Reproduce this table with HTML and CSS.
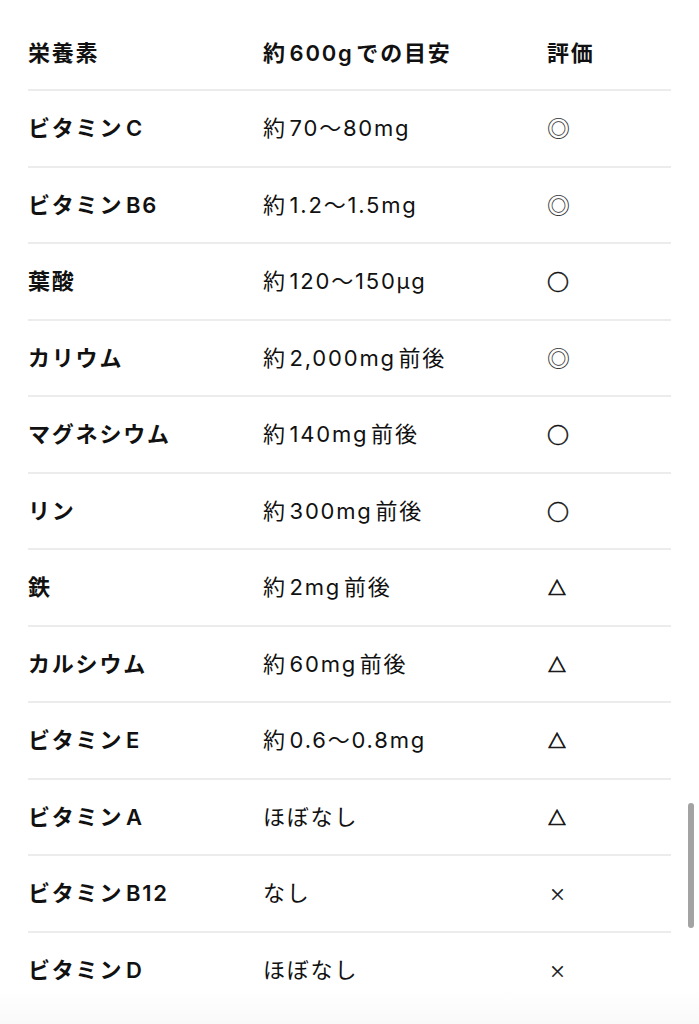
FILE: index.html
```html
<!DOCTYPE html>
<html lang="ja">
<head>
<meta charset="utf-8">
<link rel="stylesheet" href="styles.css">
</head>
<body>
<div class="page">
  <table class="nutri">
    <thead>
      <tr><th>栄養素</th><th>約600gでの目安</th><th>評価</th></tr>
    </thead>
    <tbody>
      <tr><td class="name">ビタミンC</td><td>約70～80mg</td><td><span class="double">◎</span></td></tr>
      <tr><td class="name">ビタミンB6</td><td>約1.2～1.5mg</td><td><span class="double">◎</span></td></tr>
      <tr><td class="name">葉酸</td><td>約120～150µg</td><td><span class="circle">○</span></td></tr>
      <tr><td class="name">カリウム</td><td>約2,000mg前後</td><td><span class="double">◎</span></td></tr>
      <tr><td class="name">マグネシウム</td><td>約140mg前後</td><td><span class="circle">○</span></td></tr>
      <tr><td class="name">リン</td><td>約300mg前後</td><td><span class="circle">○</span></td></tr>
      <tr><td class="name">鉄</td><td>約2mg前後</td><td><span class="tri">△</span></td></tr>
      <tr><td class="name">カルシウム</td><td>約60mg前後</td><td><span class="tri">△</span></td></tr>
      <tr><td class="name">ビタミンE</td><td>約0.6～0.8mg</td><td><span class="tri">△</span></td></tr>
      <tr><td class="name">ビタミンA</td><td>ほぼなし</td><td><span class="tri">△</span></td></tr>
      <tr><td class="name">ビタミンB12</td><td>なし</td><td><span class="cross">×</span></td></tr>
      <tr><td class="name">ビタミンD</td><td>ほぼなし</td><td><span class="cross">×</span></td></tr>
    </tbody>
  </table>
  <div class="scrollbar"></div>
</div>
</body>
</html>
```

FILE: styles.css
```css
html, body {
  margin: 0;
  padding: 0;
  background: #ffffff;
}
body {
  font-family: "Inter", "Noto Sans CJK JP", sans-serif;
  color: #111111;
  text-autospace: normal;
}
.page {
  position: relative;
  width: 699px;
  height: 1024px;
  overflow: hidden;
  padding: 16px 28px 0 28px;
  box-sizing: border-box;
  background: linear-gradient(to bottom, #ffffff 0, #ffffff 990px, #f9f9f9 1024px);
}
.nutri {
  width: 643px;
  border-collapse: collapse;
  font-size: 22px;
  letter-spacing: 1.8px;
}
.nutri th, .nutri td {
  text-align: left;
  padding: 0;
  height: 74.5px;
  vertical-align: middle;
  border-bottom: 2px solid #ececec;
  line-height: 1;
}
.nutri th {
  font-weight: 600;
  height: 73px;
}
.nutri tr:last-child td {
  border-bottom: none;
}
.nutri th:nth-child(1) { width: 235px; }
.nutri th:nth-child(2) { width: 284px; }
.name {
  font-weight: 600;
}
.double {
  font-family: "Noto Sans CJK JP", sans-serif;
  font-size: 23px;
  color: #333333;
}
.circle {
  font-family: "Noto Sans CJK JP", sans-serif;
  font-size: 22px;
  font-weight: 700;
  -webkit-text-stroke: 0.5px #111111;
}
.tri {
  font-family: "Noto Sans CJK JP", sans-serif;
  font-size: 18px;
  font-weight: 900;
  margin-left: 1px;
  -webkit-text-stroke: 0.7px #111111;
}
.cross {
  font-family: "Noto Sans CJK JP", sans-serif;
  font-size: 17px;
  margin-left: 2px;
  -webkit-text-stroke: 0.3px #111111;
}
.scrollbar {
  position: absolute;
  right: 5px;
  top: 803px;
  width: 6px;
  height: 125px;
  border-radius: 3px;
  background: #a3a3a3;
}
```
